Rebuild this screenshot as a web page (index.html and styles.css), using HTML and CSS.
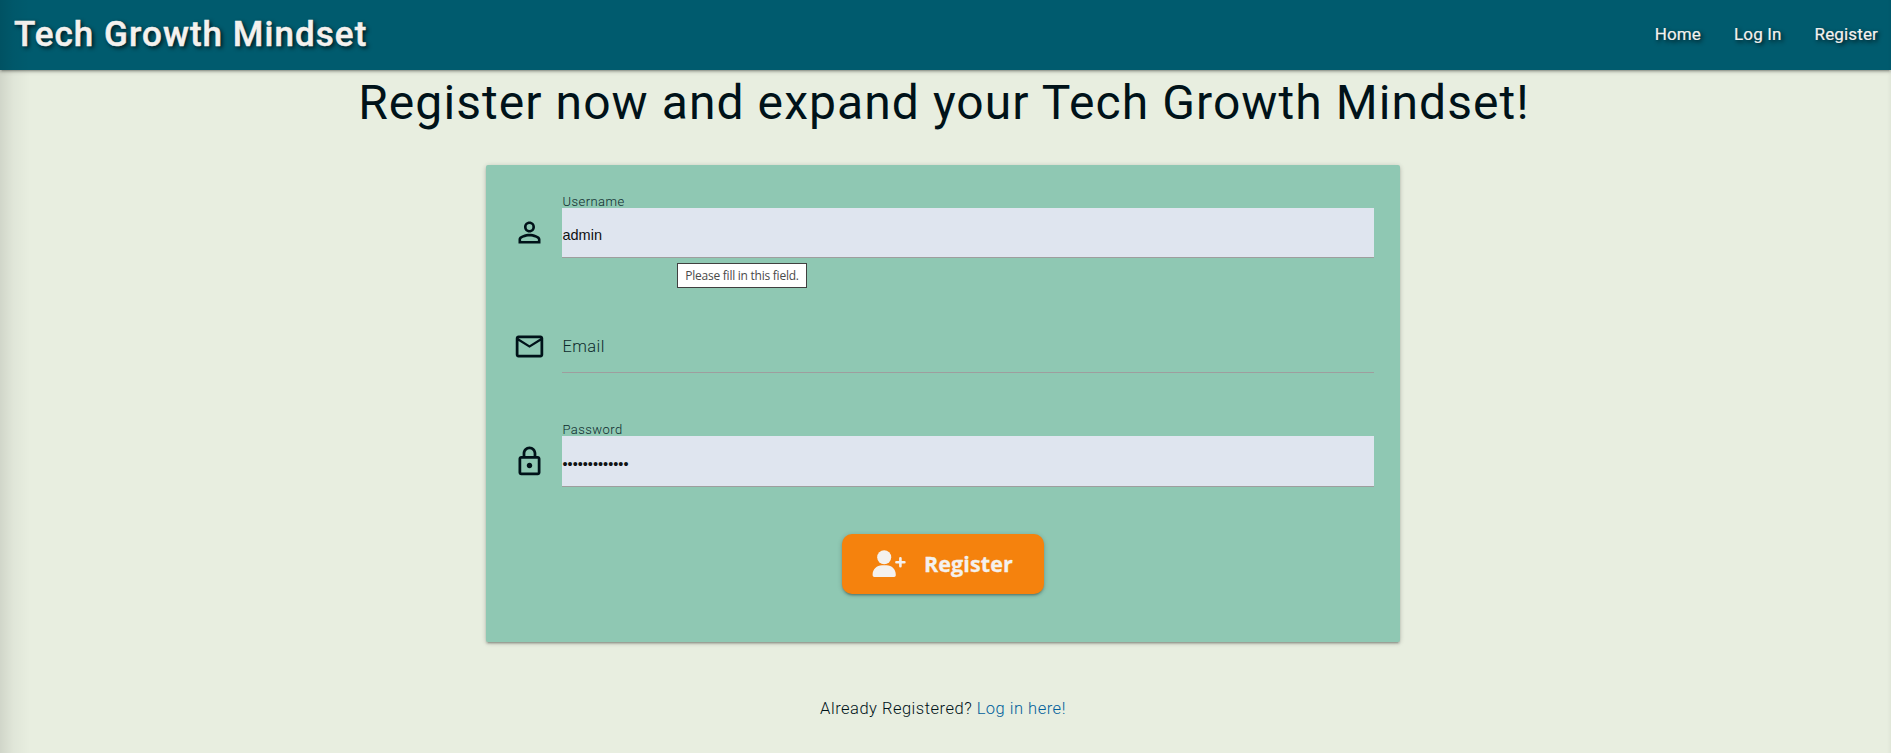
FILE: index.html
```html
<!DOCTYPE html>
<html lang="en">
<head>
<meta charset="utf-8">
<title>Register - Tech Growth Mindset</title>
<link rel="stylesheet" href="styles.css">
</head>
<body>
<header class="navbar">
  <a class="brand"><span>Tech Growth Mindset</span></a>
  <nav class="links"><a class="l-home">Home</a><a class="l-login">Log In</a><a class="l-reg">Register</a></nav>
</header>
<main>
  <h1><span>Register now and expand your Tech Growth Mindset!</span></h1>
  <form class="card">
    <div class="row">
      <svg class="icon" viewBox="0 0 24 24"><path d="M12 5.9a2.1 2.1 0 1 1 0 4.2 2.1 2.1 0 0 1 0-4.2m0 9c2.97 0 6.1 1.46 6.1 2.1v1.1H5.9V17c0-.64 3.13-2.1 6.1-2.1M12 4C9.79 4 8 5.790 8 8s1.790 4 4 4 4-1.790 4-4-1.790-4-4-4zm0 9c-2.670 0-8 1.340-8 4v3h16v-3c0-2.660-5.330-4-8-4z"/></svg>
      <div class="field">
        <label class="small l-user">Username</label>
        <div class="input filled">admin</div>
      </div>
      <div class="tooltip">Please fill in this field.</div>
    </div>
    <div class="row">
      <svg class="icon mail" viewBox="0 0 24 24"><path d="M22 6c0-1.100-.9-2-2-2H4c-1.100 0-2 .9-2 2v12c0 1.100.9 2 2 2h16c1.100 0 2-.9 2-2V6zm-2 0l-8 5-8-5h16zm0 12H4V8l8 5 8-5v10z"/></svg>
      <div class="field">
        <div class="input"><label class="l-email">Email</label></div>
      </div>
    </div>
    <div class="row">
      <svg class="icon" viewBox="0 0 24 24"><path d="M18 8h-1V6c0-2.760-2.240-5-5-5S7 3.240 7 6v2H6c-1.100 0-2 .9-2 2v10c0 1.100.9 2 2 2h12c1.100 0 2-.9 2-2V10c0-1.100-.9-2-2-2zM9 6c0-1.660 1.340-3 3-3s3 1.340 3 3v2H9V6zm9 14H6V10h12v10zm-6-3c1.100 0 2-.9 2-2s-.9-2-2-2-2 .9-2 2 .9 2 2 2z"/></svg>
      <div class="field">
        <label class="small l-pass">Password</label>
        <div class="input filled tall">•••••••••••••</div>
      </div>
    </div>
    <div class="actions">
      <div class="button">
        <svg class="user-plus" viewBox="0 0 34 28"><circle cx="12.200" cy="7.300" r="7"/><path d="M.6 25c0-5.800 4.300-9.700 9.400-9.700h4.600c5.100 0 9.200 3.900 9.200 9.700 0 1.300-.7 2-1.700 2H2.400c-1.100 0-1.800-.7-1.800-2z"/><path class="plus" d="M24.400 12.300h8M28.400 8.300v8"/></svg>
        <span>Register</span>
      </div>
    </div>
  </form>
  <p class="already"><span>Already Registered?</span> <a>Log in here!</a></p>
</main>
<div class="edge left"></div>
<div class="edge right"></div>
</body>
</html>
```
FILE: styles.css
```css
* { box-sizing: border-box; }
body {
  margin: 0;
  height: 753px;
  overflow: hidden;
  position: relative;
  background: #e8eee0;
  color: #001219;
  font-family: Roboto, "Liberation Sans", sans-serif;
}
main { width: 1886px; }
.navbar {
  height: 70px;
  padding: 0 13px 0 14px;
  display: flex;
  align-items: center;
  justify-content: space-between;
  background: #005b6e;
  color: #f4f1ee;
  box-shadow: 0 2px 2px 0 rgba(0,0,0,.14), 0 3px 1px -2px rgba(0,0,0,.12), 0 1px 5px 0 rgba(0,0,0,.2);
  position: relative;
}
.brand {
  font-size: 35px;
  line-height: 68px;
  font-weight: 500;
  letter-spacing: 1.05px;
  -webkit-text-stroke: .5px #f4f1ee;
  text-shadow: 2px 2px 4px rgba(0,0,0,.8);
}
.links {
  display: flex;
  gap: 33px;
  font-size: 17px;
  line-height: 68px;
  letter-spacing: .15px;
  text-shadow: 2px 2px 4px rgba(0,0,0,.8);
  -webkit-text-stroke: .2px #f4f1ee;
  transform: translateY(-1px);
}
h1 {
  margin: 0;
  height: 95px;
  padding: 4px 0 0 2px;
  text-align: center;
  white-space: nowrap;
  font-size: 48px;
  line-height: 57px;
  font-weight: 400;
  letter-spacing: 1.07px;
}
.card {
  width: 914px;
  height: 477px;
  margin: 0 auto;
  padding: 26px 26px 0 28px;
  border-radius: 2px;
  background: #8fc8b3;
  box-shadow: 0 2px 2px 0 rgba(0,0,0,.14), 0 3px 1px -2px rgba(0,0,0,.12), 0 1px 5px 0 rgba(0,0,0,.2);
}
.row {
  position: relative;
  height: 114.500px;
  display: flex;
  gap: 17px;
}
.icon {
  width: 33px;
  height: 33px;
  margin: 25px 0 0 -1.500px;
  fill: #001219;
}
.mail { margin-top: 24px; }
.field {
  width: 812px;
  height: 67px;
  margin-left: auto;
  display: flex;
  flex-direction: column;
  justify-content: flex-end;
}
label { color: #0d2a2c; font-weight: 300; }
.small {
  font-size: 13px;
  line-height: 22px;
  height: 17px;
  letter-spacing: .45px;
}
.input {
  height: 50px;
  padding-top: 2px;
  border-bottom: 1px solid #9e9e9e;
  font-size: 16.500px;
  line-height: 44px;
}
.input label { letter-spacing: .4px; }
.filled {
  background: #dfe5ef;
  color: #101214;
  font: 14.500px/50px "Liberation Sans", Arial, sans-serif;
}
.tall { height: 51px; line-height: 53px; }
.tooltip {
  position: absolute;
  left: 163px;
  top: 72px;
  width: 130px;
  height: 25px;
  border: 1px solid #404040;
  background: #fff;
  color: #4a4a4a;
  font: 12px/24px "Open Sans", "Noto Sans", sans-serif;
  letter-spacing: -.25px;
  text-align: center;
  white-space: nowrap;
}
.actions {
  display: flex;
  justify-content: center;
  padding-right: 2px;
  margin-top: -1px;
}
.button {
  width: 202px;
  height: 60px;
  padding-left: 30px;
  display: flex;
  align-items: center;
  gap: 18px;
  border-radius: 10px;
  background: #f5820d;
  color: #f4f1ee;
  font: 700 21.500px/62px "Open Sans", "Noto Sans", sans-serif;
  letter-spacing: .1px;
  -webkit-text-stroke: .3px #f4f1ee;
  box-shadow: 0 2px 2px 0 rgba(0,0,0,.14), 0 3px 1px -2px rgba(0,0,0,.12), 0 1px 5px 0 rgba(0,0,0,.2);
}
.button span { padding-top: 1px; }
.user-plus { width: 34px; height: 28px; fill: #f4f1ee; flex: none; }
.plus { fill: none; stroke: #f4f1ee; stroke-width: 2.600; stroke-linecap: round; }
.already {
  margin: 54px 0 0;
  text-align: center;
  font-size: 16.500px;
  font-weight: 300;
  line-height: 26px;
  letter-spacing: .5px;
}
.already a { color: #005f9b; }
.edge {
  position: absolute;
  top: 0;
  bottom: 0;
}
.left {
  left: 0;
  width: 30px;
  background: linear-gradient(90deg, rgba(0,0,0,.1), rgba(0,0,0,.035) 45%, rgba(0,0,0,0));
}
.right {
  right: 0;
  width: 4px;
  background: linear-gradient(270deg, rgba(0,0,0,.035), rgba(0,0,0,0));
}
```
